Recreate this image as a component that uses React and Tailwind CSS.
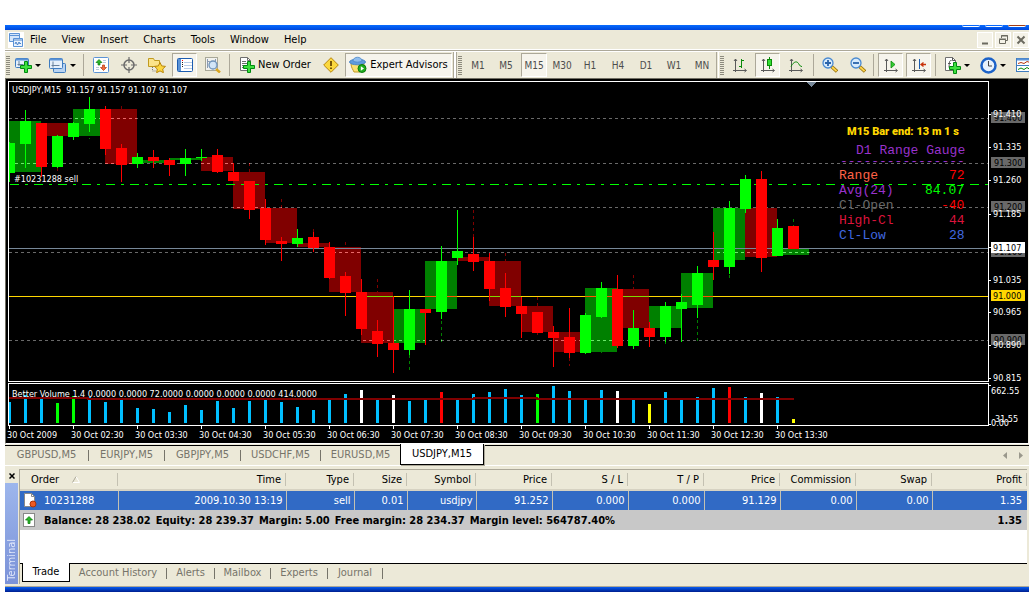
import { useState } from "react";
import clsx from "clsx";

const LIME = "#00ff00";
const RED = "#ff0000";
const BLUE = "#00bfff";
const WHITE = "#ffffff";
const YELLOW = "#ffff00";

// one bar every 16px: [high, bodyTop, bodyBottom, low, up]
const CANDLES = [
  [142, 143, 173, 182, 1], [110, 121, 144, 168, 1], [123, 123, 167, 177, 0], [135, 136, 167, 168, 1],
  [122, 123, 137, 140, 1], [97, 109, 124, 132, 1], [106, 109, 149, 155, 0], [144, 148, 165, 182, 0],
  [153, 157, 164, 168, 1], [150, 157, 161, 168, 0], [158, 160, 165, 176, 0], [149, 158, 164, 176, 1],
  [149, 157, 158, 161, 1], [149, 155, 172, 173, 0], [163, 172, 181, 181, 0], [181, 181, 210, 219, 0],
  [199, 208, 240, 245, 0], [237, 241, 244, 261, 0], [229, 238, 244, 247, 1], [232, 237, 248, 252, 0],
  [242, 247, 278, 279, 0], [272, 276, 293, 316, 0], [279, 292, 329, 335, 0], [320, 331, 344, 357, 0],
  [296, 343, 350, 373, 0], [290, 309, 350, 355, 1], [309, 309, 313, 345, 0], [246, 261, 312, 319, 1],
  [210, 251, 258, 265, 1], [237, 254, 262, 271, 0], [253, 261, 289, 301, 0], [273, 288, 307, 317, 0],
  [297, 306, 314, 338, 0], [312, 312, 333, 333, 0], [326, 332, 338, 367, 0], [308, 337, 353, 358, 0],
  [313, 315, 353, 354, 1], [282, 288, 317, 318, 1], [275, 289, 346, 348, 0], [310, 328, 346, 349, 1],
  [322, 328, 337, 347, 0], [302, 306, 337, 342, 1], [294, 302, 309, 342, 1], [266, 273, 305, 318, 1],
  [232, 260, 267, 280, 0], [201, 208, 267, 274, 1], [175, 179, 209, 213, 1], [171, 179, 258, 272, 0],
  [219, 228, 256, 256, 1], [226, 226, 249, 249, 0],
];

// half-hour boxes, two bars each: [top, bottom, up]
const BOXES = [
  [121, 172, 1], [123, 136, 0], [109, 136, 1], [109, 164, 0], [160, 163, 1], [158, 160, 1], [157, 171, 0],
  [172, 209, 0], [208, 243, 0], [243, 247, 0], [247, 292, 0], [292, 343, 0], [309, 343, 1], [261, 309, 1],
  [257, 261, 0], [261, 306, 0], [306, 332, 0], [332, 352, 0], [288, 352, 1], [289, 328, 0], [306, 328, 1],
  [273, 308, 1], [208, 260, 1], [208, 257, 0], [249, 255, 1],
];

// dashed shadows of the boxes: [x, from, to, up]
const SHADOWS = [
  [25, 168, 173, 1], [57, 168, 173, 0], [89, 132, 139, 1], [121, 106, 109, 0], [249, 163, 172, 0],
  [281, 199, 208, 0], [313, 229, 232, 0], [345, 242, 247, 0], [377, 279, 292, 0], [409, 355, 370, 1],
  [441, 321, 342, 1], [473, 210, 238, 0], [505, 253, 261, 0], [537, 297, 306, 0], [537, 333, 335, 0],
  [569, 358, 366, 0], [601, 351, 353, 1], [633, 275, 289, 0], [665, 342, 344, 1], [697, 320, 341, 1],
  [729, 275, 279, 1], [793, 219, 226, 1],
];

const VOLUMES = [
  [402], [395], [398], [403, LIME], [396, LIME], [397], [402], [400], [408], [409], [412], [405], [410],
  [401], [408], [401], [400], [402], [407], [410], [400], [394], [390, WHITE], [400], [395, WHITE], [401],
  [400], [392, RED], [400], [394], [392], [389], [395], [394, LIME], [386], [391], [400], [390],
  [391, WHITE], [400], [404, YELLOW], [392], [400], [397], [388], [387, RED], [397], [393, WHITE], [397],
  [419, YELLOW],
];

const TIMES = [
  "30 Oct 2009", "30 Oct 02:30", "30 Oct 03:30", "30 Oct 04:30", "30 Oct 05:30", "30 Oct 06:30",
  "30 Oct 07:30", "30 Oct 08:30", "30 Oct 09:30", "30 Oct 10:30", "30 Oct 11:30", "30 Oct 12:30",
  "30 Oct 13:30",
];

const PRICES = [
  [114, "91.410"], [147, "91.335"], [180, "91.260"], [214, "91.185"], [247, ""], [280, "91.035"],
  [312, "90.965"], [345, "90.890"], [378, "90.815"],
];

const LEVELS = [
  [118, "91.400"], [163, "91.300"], [207, "91.200"], [252, "91.100"], [340, "90.900"],
];

const GAUGE = [
  [179, "Range", "#ff6347", "72", "#ff0000", 949],
  [194, "Avg(24)", "#9932cc", "84.07", "#00ff00", 925],
  [209, "Cl-Open", "#696969", "-40", "#ff0000", 941],
  [224, "High-Cl", "#dc143c", "44", "#dc143c", 949],
  [239, "Cl-Low", "#4169e1", "28", "#4169e1", 949],
];

function Chart() {
  return (
    <svg
      viewBox="6 79 1022 364"
      preserveAspectRatio="xMinYMin meet"
      shapeRendering="crispEdges"
      className="block h-[364px] w-full bg-black text-[9px]"
      role="img"
      aria-label="USDJPY M15 chart"
    >
      <g className="isolate">
        <rect x="6" y="79" width="1022" height="364" fill="#000" />
        {BOXES.map(([top, bottom, up], i) => (
          <rect key={i} x={9 + i * 32} y={top} width="32" height={bottom - top} fill={up ? "#008000" : "#800000"} />
        ))}
        {SHADOWS.map(([x, from, to, up], i) => (
          <line key={i} x1={x + 0.5} x2={x + 0.5} y1={from} y2={to} stroke={up ? "#008000" : "#800000"} strokeDasharray="3 3" />
        ))}
        {LEVELS.map(([y]) => (
          <line key={y} x1="9" x2="988" y1={y + 0.5} y2={y + 0.5} stroke="#696969" strokeDasharray="3 3" className="mix-blend-plus-lighter" />
        ))}
        <line x1="9" x2="988" y1="296.5" y2="296.5" stroke="#ffd700" className="mix-blend-difference" />
        <line x1="10" x2="988" y1="184.5" y2="184.5" stroke={LIME} strokeDasharray="9 6 3 6" />
        <line x1="9" x2="988" y1="248.5" y2="248.5" stroke="#778899" />
      </g>

      {/* candles */}
      {CANDLES.map(([high, top, bottom, low, up], i) => {
        const x = 9 + i * 16;
        const left = Math.max(x - 5, 9);
        return (
          <g key={i} fill={up ? LIME : RED}>
            <rect x={x} y={high} width="1" height={low - high} />
            <rect x={left} y={top} width={x + 6 - left} height={bottom - top} />
          </g>
        );
      })}

      {/* volume */}
      {VOLUMES.map(([top, color = BLUE], i) => (
        <rect key={i} x={i ? 8 + i * 16 : 9} y={top} width={i ? 3 : 2} height={423 - top} fill={color} />
      ))}
      <path d="M9 398H88V399H474V398H537V399H794" fill="none" stroke="#800000" strokeWidth="2" />

      {/* frames */}
      <g fill="none" stroke="#fff">
        <rect x="8.5" y="81.5" width="980" height="300" />
        <rect x="8.5" y="383.5" width="980" height="42" />
      </g>
      <path d="M806 82h10l-5 5z" fill="#778899" />

      {/* time scale */}
      {TIMES.map((label, i) => (
        <g key={label} fill="#fff">
          <rect x={9 + i * 64} y="426" width="1" height="3" />
          <text x={7 + i * 64} y="438">{label}</text>
        </g>
      ))}

      {/* price scale */}
      {LEVELS.map(([y, label]) => (
        <g key={label}>
          <rect x="991" y={y - 6} width="34" height="11" fill="#696969" />
          <text x="994" y={y + 3} fill="#000">{label}</text>
        </g>
      ))}
      {PRICES.map(([y, label]) => (
        <g key={y} fill="#fff">
          <rect x="989" y={y} width="2" height="1" />
          <text x="993" y={y + 3}>{label}</text>
        </g>
      ))}
      <rect x="991" y="290" width="34" height="11" fill="#ffd700" />
      <text x="993" y="299" fill="#000">91.000</text>
      <rect x="991" y="242" width="34" height="11" fill="#fff" />
      <text x="993" y="251" fill="#000">91.107</text>
      <g fill="#fff">
        <rect x="989" y="385" width="2" height="1" />
        <rect x="989" y="424" width="2" height="1" />
        <text x="991" y="394">662.55</text>
        <text x="995" y="422">31.55</text>
        <text x="991" y="426">0.00</text>
      </g>

      {/* labels over the plot */}
      <g fill="#fff">
        <text x="12" y="93">USDJPY,M15&nbsp; 91.157 91.157 91.107 91.107</text>
        <text x="14" y="182">#10231288 sell</text>
        <text x="12" y="397">Better Volume 1.4 0.0000 0.0000 72.0000 0.0000 0.0000 0.0000 414.0000</text>
      </g>
      <text x="847" y="135" fill="#ffd700" className="font-['Roboto',sans-serif] text-[11px] font-black">
        M15 Bar end: 13 m 1 s
      </text>
      <g className="font-['Liberation_Mono',monospace] text-[13px]">
        <text x="856" y="154" fill="#9932cc">D1 Range Gauge</text>
        <text x="840" y="165" fill="#9932cc">----------------</text>
        {GAUGE.map(([y, name, color, value, valueColor, x]) => (
          <g key={name}>
            <text x="839" y={y} fill={color}>{name}</text>
            <text x={x} y={y} fill={valueColor}>{value}</text>
          </g>
        ))}
      </g>
    </svg>
  );
}

function Svg({ w = 16, h = 16, children }) {
  return (
    <svg width={w} height={h} viewBox={`0 0 ${w} ${h}`} fill="none" className="shrink-0" aria-hidden="true">
      {children}
    </svg>
  );
}

const Plus = ({ x, y }) => (
  <path
    transform={`translate(${x} ${y})`}
    d="M4.5 .5h3v4h4v3h-4v4h-3v-4h-4v-3h4z"
    fill="#3fe03f"
    stroke="#008a10"
  />
);

const Axes = ({ children }) => (
  <Svg>
    <path d="M3.500 2v13M1 13.500h13M2 4l1.500-2L5 4M12.500 12l2 1.500-2 1.500" stroke="#5a5a5a" />
    {children}
  </Svg>
);

const AppIcon = () => (
  <Svg>
    <rect width="16" height="16" fill="#fff" />
    <path d="M1.500 1.500h10v8h-10z" fill="#d4e6fa" stroke="#5b93d6" />
    <path d="M1 3.500h11" stroke="#5b93d6" />
    <path d="M5.500 6.500h9v8h-9z" fill="#eaf3fd" stroke="#5b93d6" />
    <path d="M5 8h10M7 12l1-2 1.500 3 1.500-3 1 2 1-1" stroke="#4a84cc" />
  </Svg>
);
const NewChartIcon = () => (
  <Svg w={17}>
    <rect x=".5" y="1.500" width="13" height="9" rx="1" fill="#e6f0fb" stroke="#3f7cc0" />
    <path d="M1 2.500h12" stroke="#5b93d6" strokeWidth="2" />
    <path d="M4 4v5M2.500 7.500h6" stroke="#68809c" />
    <Plus x={5} y={4} />
  </Svg>
);
const ProfilesIcon = () => (
  <Svg w={18}>
    <rect x="4.500" y="6.500" width="12" height="9" rx="1" fill="#b9d3f2" stroke="#3f7cc0" />
    <rect x=".5" y="1.500" width="13" height="10" rx="1" fill="#e6f0fb" stroke="#3f7cc0" />
    <path d="M1 2.500h12" stroke="#5b93d6" strokeWidth="2" />
    <path d="M4 4.500v6M2.500 8.500h8" stroke="#68809c" />
  </Svg>
);
const MarketIcon = () => (
  <Svg>
    <rect x=".5" y=".5" width="15" height="15" rx="1" fill="#fff" stroke="#5b93d6" />
    <path d="M10 3.500h3M10 5.500h3M3 10.500h3M3 12.500h3" stroke="#b9c8dc" />
    <path d="M6 2.500L9 5.500H7V8H5V5.500H3z" fill="#2db82d" stroke="#0c800c" strokeWidth=".7" />
    <path d="M10.500 13.500l3-3h-2V8h-2v2.500h-2z" fill="#f26a3c" stroke="#b5380f" strokeWidth=".7" />
  </Svg>
);
const CrosshairIcon = () => (
  <Svg>
    <circle cx="8" cy="8" r="5" stroke="#6b6b6b" strokeWidth="1.500" />
    <path d="M8 0v6M8 10v6M0 8h6M10 8h6" stroke="#6b6b6b" strokeWidth="1.200" />
  </Svg>
);
const NavigatorIcon = () => (
  <Svg w={18}>
    <path d="M.5 1.500h5l1 2h5v6H.5z" fill="#fbe38a" stroke="#c09a20" />
    <path d="M4.500 10v4h3" stroke="#777" strokeDasharray="1 1" />
    <path d="M12 5.500l1.700 3.400 3.800.5-2.800 2.600.7 3.700-3.400-1.800-3.400 1.800.7-3.700L6.500 9.400l3.800-.5z" fill="#fcd640" stroke="#b8860b" />
  </Svg>
);
const TerminalIcon = () => (
  <Svg>
    <rect x=".5" y="1.500" width="15" height="13" rx="1" fill="#fff" stroke="#1c5cb0" />
    <path d="M1 2h3v12H1z" fill="#5b93d6" />
    <path d="M7 5.500h8M7 8.500h8M7 11.500h8" stroke="#b7cce8" />
    <path d="M5 5.500h1M5 7.500h1M5 9.500h1" stroke="#222" />
    <path d="M5 3.500h1" stroke="#f00" />
  </Svg>
);
const TesterIcon = () => (
  <Svg w={18}>
    <rect x="1.500" y=".5" width="12" height="13" fill="#f2f2ee" stroke="#a8a898" />
    <path d="M3.500 2v9M11.500 2v9M3 6l2-2 2 3" stroke="#8a9ab0" />
    <path d="M12 12l4 3.500" stroke="#d9a520" strokeWidth="2.500" />
    <circle cx="9" cy="8" r="4" fill="#cfe4f8" fillOpacity=".9" stroke="#6f93ba" strokeWidth="1.300" />
  </Svg>
);
const OrderIcon = () => (
  <Svg w={16}>
    <path d="M1.500 .5h7l3 3v10h-10z" fill="#fff" stroke="#6f6f6f" />
    <path d="M8.500 .5v3h3M3 4.500h4M3 6.500h6M3 8.500h5M3 10.500h3" stroke="#6f6f6f" />
    <Plus x={4} y={4} />
  </Svg>
);
const WarningIcon = () => (
  <Svg>
    <path d="M8 .7L15.300 8 8 15.300.7 8z" fill="#fbd83e" stroke="#b8860b" strokeLinejoin="round" />
    <path d="M8 4v5M8 10.500v1.500" stroke="#6b4a00" strokeWidth="1.800" />
  </Svg>
);
const AdvisorIcon = () => (
  <Svg w={18} h={18}>
    <path d="M2 7.500c0 4 2 6 3 8.500h6c1-3 4-4 4-8.500z" fill="#fbe070" stroke="#c29a24" />
    <ellipse cx="8.500" cy="6" rx="8" ry="2.800" fill="#5f9bdc" stroke="#4a86c8" />
    <path d="M4 5c0-5 9-5 9 0-2 1.500-7 1.500-9 0z" fill="#8fbdee" stroke="#4a86c8" strokeWidth=".8" />
    <circle cx="13" cy="12.500" r="4" fill="#1fae1f" stroke="#0b7a0b" />
    <path d="M11.800 10.300v4.400l3.200-2.200z" fill="#fff" />
  </Svg>
);
const BarsIcon = () => (
  <Axes>
    <path d="M9.500 2v9M9.500 3.500H12M7 9.500h2.500" stroke="#0a8a0a" />
  </Axes>
);
const CandlesIcon = () => (
  <Axes>
    <path d="M9.500 0v12" stroke="#0a8a0a" />
    <rect x="7.500" y="2.500" width="4" height="6" fill="#33dd33" stroke="#0a8a0a" />
  </Axes>
);
const LineIcon = () => (
  <Axes>
    <path d="M3 9.500C6 4 9 4 10.500 6.500s2 3 3.500 3" stroke="#0a8a0a" />
  </Axes>
);
const ZoomIcon = ({ plus }) => (
  <Svg>
    <path d="M9.500 9.500l5.500 5" stroke="#9a7410" strokeWidth="3.500" />
    <path d="M10 10l4.600 4.200" stroke="#ffd54a" strokeWidth="1.800" />
    <circle cx="6" cy="6" r="5" fill="#d8ebfc" stroke="#4a8ad0" strokeWidth="1.300" />
    <path d={plus ? "M3 6h6M6 3v6" : "M3 6h6"} stroke="#2a64aa" strokeWidth="1.800" />
  </Svg>
);
const ScrollIcon = () => (
  <Axes>
    <path d="M8 4v7l4-3.500z" fill="#33cc33" stroke="#0a8a0a" strokeWidth=".8" />
  </Axes>
);
const ShiftIcon = () => (
  <Axes>
    <path d="M8.500 2v10" stroke="#1c5cb0" />
    <path d="M10 7.500h5M12.500 5.500l-2.500 2 2.500 2" stroke="#c8320a" strokeWidth="1.300" />
  </Axes>
);
const IndicatorIcon = () => (
  <Svg w={17} h={18}>
    <path d="M1.500 1.500h7l3 3v10h-10z" fill="#fff" stroke="#6f6f6f" />
    <path d="M8.500 1.500v3h3M7.500 4.500C5 4 5.500 7 5 11.500M4 7.500h3" stroke="#555" />
    <Plus x={5} y={6} />
  </Svg>
);
const ClockIcon = () => (
  <Svg w={17} h={17}>
    <circle cx="8.500" cy="8.500" r="7" fill="#e8f2fd" stroke="#1c62c8" strokeWidth="2.500" />
    <path d="M8.500 4v5H12" stroke="#444" />
  </Svg>
);
const TemplateIcon = () => (
  <Svg w={18}>
    <rect x=".5" y="1.500" width="18" height="13" fill="#fff" stroke="#3f7cc0" />
    <path d="M1 2.500h17" stroke="#5b93d6" strokeWidth="2" />
    <path d="M1 8.500h17" stroke="#3f7cc0" />
    <path d="M2 6.500l3-1 3 1 3-2 3 1" stroke="#b5380f" />
    <path d="M2 12.500l3-1.500 3 1.500 3-2 3 2" stroke="#0a8a0a" />
  </Svg>
);
const Caret = () => (
  <svg width="6" height="3" viewBox="0 0 6 3" className="shrink-0" aria-hidden="true">
    <path d="M0 0h6L3 3z" fill="#000" />
  </svg>
);

const Grip = () => (
  <span className="mx-px flex w-[4px] shrink-0 flex-col gap-px self-center">
    {Array.from({ length: 10 }, (_, i) => (
      <i key={i} className="h-px bg-[#8d8b7e]" />
    ))}
  </span>
);

const Sep = () => <span className="mx-[3px] h-[22px] w-px shrink-0 bg-[#aca899]" />;

function Tool({ label, pressed, className = "w-[25px]", children }) {
  return (
    <button
      type="button"
      aria-label={label}
      aria-pressed={pressed}
      className={clsx(
        "flex h-[24px] shrink-0 items-center justify-center gap-[3px] border text-[11px]",
        pressed
          ? "border-t-[#aca899] border-l-[#aca899] border-r-white border-b-white bg-[#f6f4ec]"
          : "border-transparent",
        className,
      )}
    >
      {children}
    </button>
  );
}

const FRAMES = ["M1", "M5", "M15", "M30", "H1", "H4", "D1", "W1", "MN"];

function Toolbar() {
  const [frame, setFrame] = useState("M15");

  return (
    <div className="flex h-[26px] items-center overflow-hidden bg-[#ece9d8]">
      <Grip />
      <Tool label="New chart" className="w-[34px]"><NewChartIcon /><Caret /></Tool>
      <Tool label="Profiles" className="w-[35px]"><ProfilesIcon /><Caret /></Tool>
      <Sep />
      <div className="flex gap-[3px] px-px">
        <Tool label="Market Watch"><MarketIcon /></Tool>
        <Tool label="Data Window"><CrosshairIcon /></Tool>
        <Tool label="Navigator"><NavigatorIcon /></Tool>
        <Tool label="Terminal" pressed><TerminalIcon /></Tool>
        <Tool label="Strategy Tester"><TesterIcon /></Tool>
      </div>
      <Sep />
      <Tool className="w-[84px]"><OrderIcon />New Order</Tool>
      <Tool label="MetaEditor" className="w-[27px]"><WarningIcon /></Tool>
      <Tool pressed className="ml-px w-[107px]"><AdvisorIcon />Expert Advisors</Tool>
      <span className="ml-px h-full w-[4px] shrink-0 border-x border-[#aca899] bg-white" />

      <Grip />
      <div className="ml-px flex w-[252px] shrink-0" role="group" aria-label="Timeframes">
        {FRAMES.map((name) => (
          <button
            key={name}
            type="button"
            onClick={() => setFrame(name)}
            aria-pressed={frame === name}
            className={clsx(
              "mx-px h-[24px] flex-1 border text-[10px] text-[#4d4d4d]",
              frame === name
                ? "border-t-[#aca899] border-l-[#aca899] border-r-white border-b-white bg-[#f6f4ec]"
                : "border-transparent",
            )}
          >
            {name}
          </button>
        ))}
      </div>
      <span className="h-full w-[3px] shrink-0 border-r border-l border-l-[#aca899] border-r-white" />

      <Grip />
      <div className="flex gap-[3px] px-[2px]">
        <Tool label="Bar chart"><BarsIcon /></Tool>
        <Tool label="Candlesticks" pressed><CandlesIcon /></Tool>
        <Tool label="Line chart"><LineIcon /></Tool>
      </div>
      <Sep />
      <div className="flex gap-[3px]">
        <Tool label="Zoom in"><ZoomIcon plus /></Tool>
        <Tool label="Zoom out"><ZoomIcon /></Tool>
      </div>
      <Sep />
      <div className="flex gap-[3px] px-px">
        <Tool label="Auto scroll" pressed><ScrollIcon /></Tool>
        <Tool label="Chart shift" pressed><ShiftIcon /></Tool>
      </div>
      <Sep />
      <Tool label="Indicators" className="w-[36px]"><IndicatorIcon /><Caret /></Tool>
      <Tool label="Periods" className="w-[35px]"><ClockIcon /><Caret /></Tool>
      <Tool label="Templates" className="w-[30px]"><TemplateIcon /></Tool>
    </div>
  );
}

const MENU = ["File", "View", "Insert", "Charts", "Tools", "Window", "Help"];

function MenuBar() {
  return (
    <div className="flex h-[19px] items-center bg-[#ece9d8] pl-[3px]">
      <AppIcon />
      <nav className="ml-[6px] flex flex-1 gap-[15px]">
        {MENU.map((item) => (
          <button key={item} type="button" className="text-[11px] leading-[18px]">
            {item}
          </button>
        ))}
      </nav>
      <div className="flex gap-[2px]">
        <button type="button" aria-label="Minimize" className="border border-white bg-[#f4f2e8]">
          <Svg w={14} h={14}><path d="M4 10.500h6" stroke="#6b6a60" strokeWidth="2" /></Svg>
        </button>
        <button type="button" aria-label="Restore" className="border border-white bg-[#f4f2e8]">
          <Svg w={14} h={14}>
            <path d="M5.500 5V2.500h6v5H10M5 3h7M3.500 6.500h6v4h-6zM3 6h7" stroke="#6b6a60" />
          </Svg>
        </button>
        <button type="button" aria-label="Close" className="border border-white bg-[#f4f2e8]">
          <Svg w={14} h={14}><path d="M3.500 3.500l7 7M10.500 3.500l-7 7" stroke="#6b6a60" strokeWidth="2" /></Svg>
        </button>
      </div>
    </div>
  );
}

const CHARTS = [
  ["GBPUSD,M5", "w-[84px]"],
  ["EURJPY,M5", "w-[76px]"],
  ["GBPJPY,M5", "w-[76px]"],
  ["USDCHF,M5", "w-[80px]"],
  ["EURUSD,M5", "w-[79px]"],
];

function ChartTabs() {
  return (
    <div className="flex h-[20px] items-start border-t border-black bg-[#ece9d8] text-[11px] text-[#76746a]">
      {CHARTS.map(([name, width], i) => (
        <button
          key={name}
          type="button"
          className={clsx("flex h-[18px] items-center justify-center", width)}
        >
          <span className="flex-1">{name}</span>
          {i < 4 && <span className="h-[11px] w-px bg-[#76746a]" />}
        </button>
      ))}
      <button
        type="button"
        className="relative -mt-[2px] h-[21px] w-[84px] border border-t-0 border-black bg-white text-black shadow-[1px_1px_0_#aca899]"
      >
        USDJPY,M15
      </button>
      <div className="ml-auto flex gap-[12px] self-center pr-[6px]">
        <button type="button" aria-label="Scroll left">
          <svg width="4" height="7" viewBox="0 0 4 7"><path d="M4 0v7L0 3.500z" fill="#9a988c" /></svg>
        </button>
        <button type="button" aria-label="Scroll right">
          <svg width="4" height="7" viewBox="0 0 4 7"><path d="M0 0v7l4-3.500z" fill="#9a988c" /></svg>
        </button>
      </div>
    </div>
  );
}

const COLUMNS = [
  ["Time", "2009.10.30 13:19", "w-[168px]"],
  ["Type", "sell", "w-[68px]"],
  ["Size", "0.01", "w-[53px]"],
  ["Symbol", "usdjpy", "w-[69px]"],
  ["Price", "91.252", "w-[76px]"],
  ["S / L", "0.000", "w-[76px]"],
  ["T / P", "0.000", "w-[76px]"],
  ["Price", "91.129", "w-[76px]"],
  ["Commission", "0.00", "w-[76px]"],
  ["Swap", "0.00", "w-[76px]"],
  ["Profit", "1.35", "w-auto"],
];

const SUMMARY = [
  "Balance: 28 238.02",
  "Equity: 28 239.37",
  "Margin: 5.00",
  "Free margin: 28 234.37",
  "Margin level: 564787.40%",
];

function Orders() {
  return (
    <table className="w-full table-fixed border-collapse text-right text-[11px] leading-[13px]">
      <thead className="bg-[#ece9d8]">
        <tr className="h-[20px] border-b-2 border-[#d6d2c2]">
          <th className="w-[98px] p-0 text-left font-normal">
            <div className="flex items-center border-r border-[#c4c1b2] pl-[11px]">
              Order
              <svg width="8" height="7" viewBox="0 0 8 7" className="ml-[13px]" aria-hidden="true">
                <path d="M4 .5l3.500 6h-7" fill="none" stroke="#fff" />
                <path d="M.5 6.500L4 .5" stroke="#aca899" />
              </svg>
            </div>
          </th>
          {COLUMNS.map(([name, , width], i) => (
            <th key={i} className={clsx("p-0 font-normal", width)}>
              <div className="border-r border-[#c4c1b2] pr-[4px]">{name}</div>
            </th>
          ))}
        </tr>
      </thead>
      <tbody>
        <tr className="h-[20px] bg-[#316ac5] text-white">
          <td className="border-r border-[#c4c1b2] p-0">
            <div className="flex items-center gap-[7px] pl-[3px]">
              <Svg w={14} h={15}>
                <path d="M1.500 .5h7l3 3v10h-10z" fill="#fff" stroke="#8a8a8a" />
                <path d="M8.500 .5v3h3" stroke="#8a8a8a" />
                <circle cx="10" cy="11" r="3" fill="#ee5a22" stroke="#a83208" />
              </Svg>
              10231288
            </div>
          </td>
          {COLUMNS.map(([, value], i) => (
            <td key={i} className={clsx("p-0", i < 10 ? "border-r border-[#c4c1b2] pr-[3px]" : "pr-[5px]")}>
              {value}
            </td>
          ))}
        </tr>
        <tr className="h-[20px] bg-[#c8c8c8] font-bold">
          <td colSpan={11} className="p-0">
            <div className="flex items-center gap-[5px] pl-[3px] whitespace-nowrap">
              <span className="w-[16px]">
                <Svg w={12} h={14}>
                  <rect x=".5" y=".5" width="11" height="13" fill="#fff" stroke="#888" />
                  <path d="M6 3.500L9.500 7H7v3.500H5V7H2.500z" fill="#2db82d" stroke="#0a800a" strokeWidth=".8" />
                </Svg>
              </span>
              {SUMMARY.map((item) => (
                <span key={item}>{item}</span>
              ))}
            </div>
          </td>
          <td className="p-0 pr-[5px]">1.35</td>
        </tr>
      </tbody>
    </table>
  );
}

const PANES = [
  ["Account History", "w-[97px]"],
  ["Alerts", "w-[48px]"],
  ["Mailbox", "w-[56px]"],
  ["Experts", "w-[57px]"],
  ["Journal", "w-[55px]"],
];

function Terminal() {
  return (
    <section className="flex border-t border-white bg-[#ece9d8]">
      <div className="flex w-[13px] shrink-0 flex-col pt-[3px]">
        <button type="button" aria-label="Close terminal" className="flex h-[14px] items-center justify-center">
          <svg width="6" height="6" viewBox="0 0 6 6"><path d="M.5 .5l5 5M5.500 .5l-5 5" stroke="#000" strokeWidth="1.500" /></svg>
        </button>
        <div className="flex flex-1 items-center bg-linear-to-b from-[#9db6ec] to-[#7b92d8]">
          <span className="mt-auto mb-[3px] rotate-180 text-[11px] leading-[13px] text-[#dfe6fa] [writing-mode:vertical-rl]">
            Terminal
          </span>
        </div>
      </div>
      <div className="mt-[3px] mr-[2px] ml-px flex-1 border-t border-l border-[#aca899]">
        <div className="min-h-[93px] bg-white">
          <Orders />
        </div>
        <div className="flex h-[21px] items-start border-t border-black text-[11px] text-[#76746a]">
          <button type="button" className="relative -mt-px ml-[2px] h-[19px] w-[48px] border border-t-0 border-black bg-white text-black">
            Trade
          </button>
          {PANES.map(([name, width]) => (
            <button key={name} type="button" className={clsx("flex h-[19px] items-center", width)}>
              <span className="flex-1">{name}</span>
              <span className="h-[11px] w-px bg-[#76746a]" />
            </button>
          ))}
        </div>
      </div>
    </section>
  );
}

export default function App() {
  return (
    <div className="min-h-screen bg-white px-[5px] pt-[25px] font-['DejaVu_Sans_Condensed','Roboto',sans-serif] text-black">
      <div className="flex h-[5px] justify-end gap-[5px] bg-linear-to-b from-[#0a6cff] to-[#0046dc] pr-[3px]">
        <i className="h-[2px] w-[18px] rounded-b-sm border-b border-white" />
        <i className="h-[2px] w-[18px] rounded-b-sm border-b border-white" />
        <i className="h-[2px] w-[18px] rounded-b-sm border-b border-white bg-[#a03c14]" />
      </div>
      <MenuBar />
      <div className="h-[3px] border-y border-white bg-[#aca899]" />
      <Toolbar />
      <div className="border-t border-r border-b border-l border-t-[#716f64] border-r-[#f4f2e8] border-b-white border-l-[#716f64]">
        <Chart />
      </div>
      <div className="h-px bg-[#ece9d8]" />
      <ChartTabs />
      <Terminal />
      <div className="h-[3px] border-b border-[#aca899] bg-[#ece9d8]" />
      <div className="h-[5px] bg-linear-to-b from-[#0a5cf0] to-[#001e90]" />
    </div>
  );
}
